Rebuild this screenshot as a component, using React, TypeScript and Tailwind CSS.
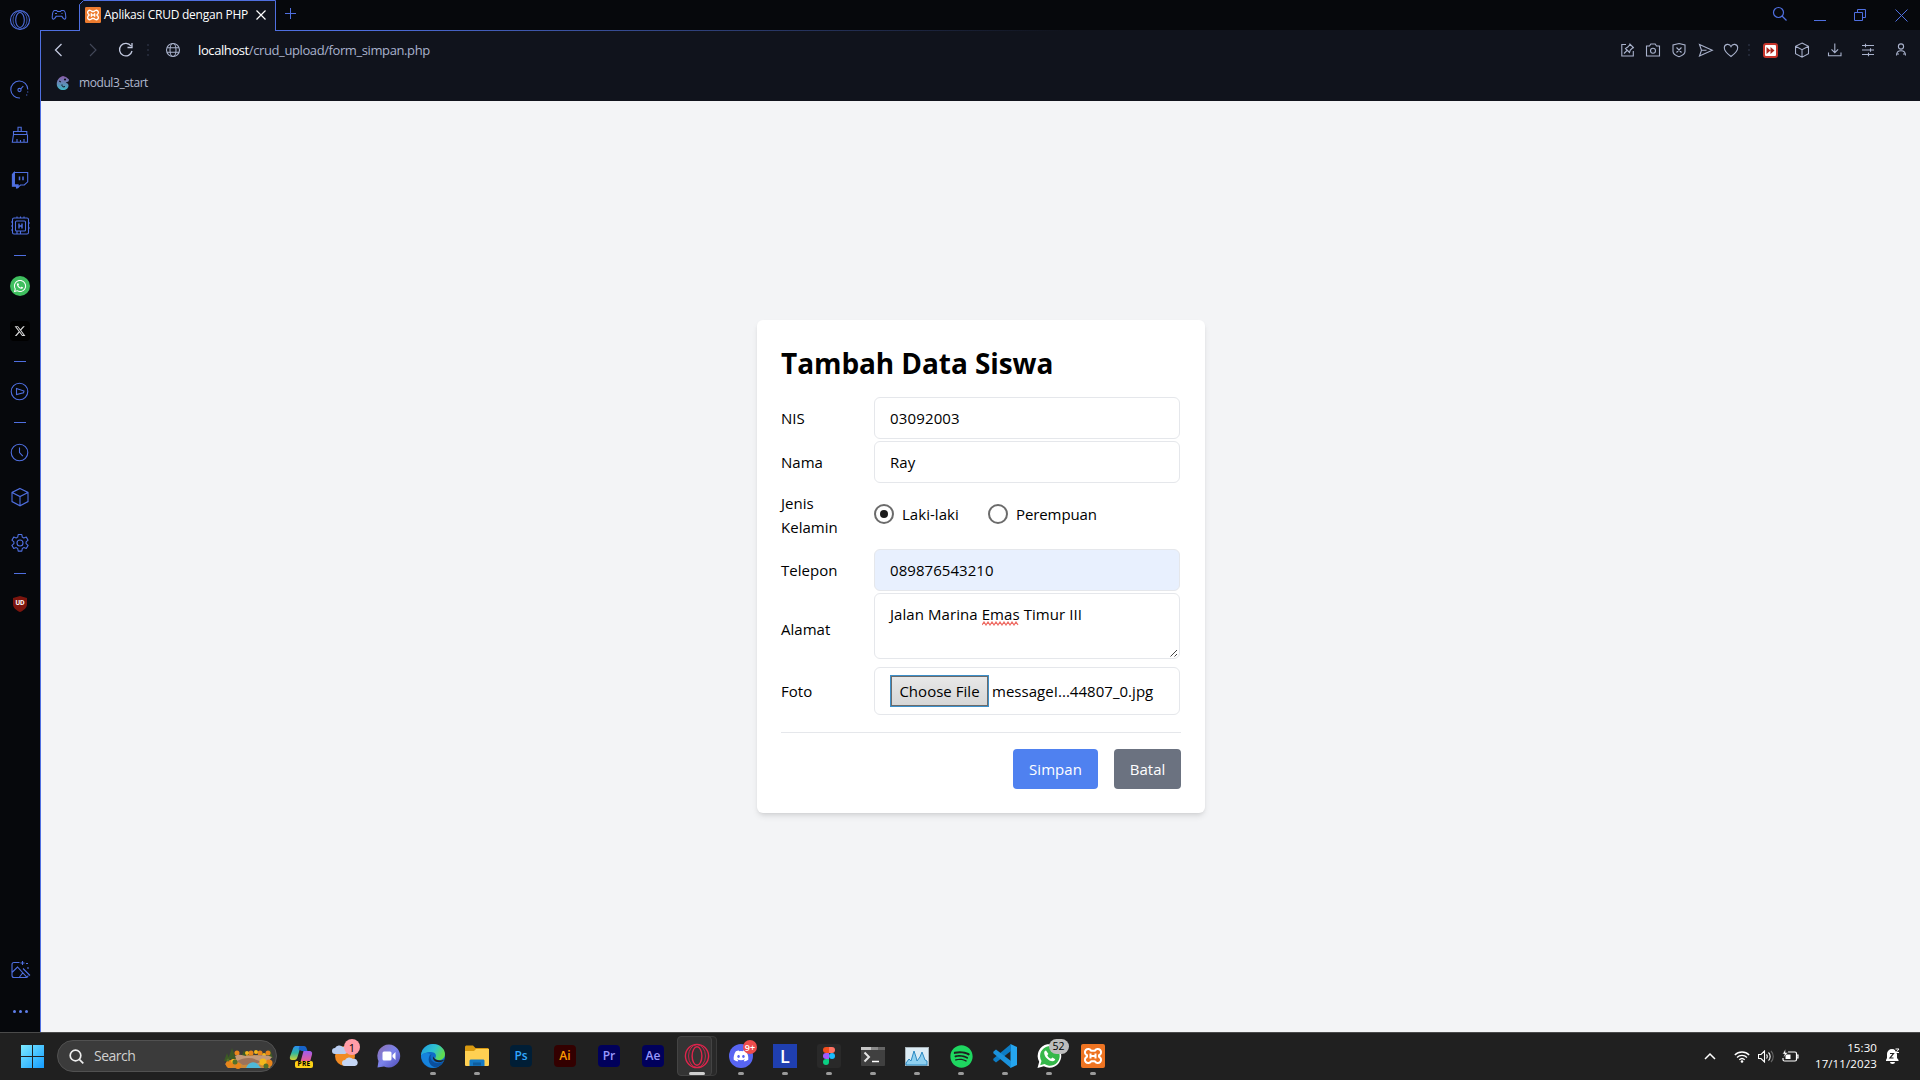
import React from "react";
import { FaWhatsapp, FaSpotify, FaDiscord } from "react-icons/fa";
import { FaXTwitter } from "react-icons/fa6";

const UI = "font-['Open_Sans','Noto_Sans',sans-serif]";

type IconProps = { children: React.ReactNode; size?: number; className?: string };
const Ico = ({ children, size = 24, className = "" }: IconProps) => (
  <svg width={size} height={size} viewBox={`0 0 ${size} ${size}`} fill="none" stroke="currentColor" strokeWidth="1.1" className={`shrink-0 ${className}`}>
    {children}
  </svg>
);

const OperaRing = () => (
  <>
    <circle cx="12" cy="12" r="9.5" />
    <ellipse cx="12" cy="12" rx="7" ry="9" strokeWidth=".7" />
    <ellipse cx="12" cy="12" rx="4.3" ry="7.5" />
  </>
);
const Cube = () => (
  <path d="M12 3.4 20 7.4V16.6L12 20.8 4 16.6V7.4ZM4 7.4 12 11.6 20 7.4M12 11.6V20.8" />
);
const XamppMark = () => (
  <path d="M10.2 6.8A3.300 3.300 0 1 0 6 11.300V12.700A3.300 3.300 0 1 0 10.200 17.200H13.800A3.300 3.300 0 1 0 18 12.700V11.300A3.300 3.300 0 1 0 13.800 6.800ZM9.500 9.500V14.500M14.500 9.500V14.500M9.500 12H14.500" stroke="#fff" strokeWidth="2" strokeLinejoin="round" />
);

const Dash = () => <div className="mt-[18px] h-px w-3 shrink-0 bg-[#4f6fe0]" />;

const Sidebar = () => (
  <aside className="flex h-[1032px] w-10 shrink-0 flex-col items-center bg-[#06080c] pt-2 text-[#4f6fe0]">
    <Ico><OperaRing /></Ico>
    <Ico className="mt-[46px] -ml-px">
      <path d="M12 20a8.500 8.500 0 1 1 7.800-8.500" /><path d="M19.700 13.500v1M18.700 16.500v1" /><circle cx="11.500" cy="12" r="1.600" /><path d="m12.700 10.800 2.600-2.600" />
    </Ico>
    <Ico className="mt-[21px]">
      <path d="M10 8V4.300h3.200V8M5.500 8.500h13.300v3H5.500ZM5.500 11.500 4.300 19.300H19.500V11.500M9 19v-3M12.500 19v-2M16 19v-3" />
    </Ico>
    <Ico className="mt-[21px]">
      <path d="M6.300 4.500H19.700V13.800L16.300 17H12.500L10 19.300V17H6.300Z" /><path d="M4.400 6.500 6.300 4.500V17H10V19.500L8.500 20V18.300H4.400Z" fill="currentColor" /><path d="M11.500 8.500v3.700M15 8.500v3.700" strokeWidth="1.500" />
    </Ico>
    <Ico className="mt-[22px]">
      <rect x="4.500" y="4" width="16" height="16" rx="1.500" /><rect x="7.500" y="7" width="10" height="10" rx="1" /><path d="M11 9.500v5M14 9.500v5M11 12h3" strokeWidth="1.400" /><path d="M9 2.500V4M12.500 2.500V4M16 2.500V4M9 20v-3M12.500 20v-3M3 8h1.500M3 12h1.500M3 16h1.500M20.500 9H22M20.500 14H22" />
    </Ico>
    <div className="mt-[17px] h-px w-3 shrink-0 bg-[#4f6fe0]" />
    <div className="mt-5 flex size-5 shrink-0 items-center justify-center rounded-full bg-[#3fbf5f] text-white"><FaWhatsapp size={14} /></div>
    <div className="mt-[25px] flex size-5 shrink-0 items-center justify-center rounded bg-black text-[#d9d9d9]"><FaXTwitter size={12} /></div>
    <div className="mt-5 h-px w-3 shrink-0 bg-[#4f6fe0]" />
    <Ico className="mt-[18px]"><circle cx="11.500" cy="11.500" r="8.300" /><path d="M8.500 8.500 16 11 15.500 12.800 8.500 14.500Z" /></Ico>
    <Dash />
    <Ico className="mt-[18px]"><circle cx="11.500" cy="11.500" r="8.300" /><path d="M11.500 6.500V11.500L14.800 15.200" /></Ico>
    <Ico className="mt-5 -ml-px"><Cube /></Ico>
    <Ico className="mt-[22px] -ml-px">
      <path d="m10.200 3.500h3.600l.5 2.600 1.500.9 2.500-.9 1.800 3.100-2 1.700v1.800l2 1.700-1.800 3.100-2.500-.9-1.500.9-.5 2.600h-3.600l-.5-2.600-1.500-.9-2.500.9-1.800-3.100 2-1.700v-1.800l-2-1.700 1.800-3.100 2.500.9 1.500-.9Z" strokeLinejoin="round" /><circle cx="12" cy="12" r="3" />
    </Ico>
    <Dash />
    <div className="mt-[18px] grid size-6 shrink-0 place-items-center">
      <svg width="14" height="16" viewBox="0 0 14 16" className="col-start-1 row-start-1"><path d="M7 0 14 2V8c0 4-3.500 6.500-7 8C3.500 14.500 0 12 0 8V2Z" fill="#7c150e" /></svg>
      <span className="col-start-1 row-start-1 -mt-0.5 font-['Roboto',sans-serif] text-[7px] font-bold leading-none text-white">UD</span>
    </div>
    <Ico className="mt-[342px]">
      <path d="M11.500 4.500H6a2 2 0 0 0-2 2V17.500a2 2 0 0 0 2 2H18.500a2 2 0 0 0 1.500-2M4 14.500 9.500 9 19 19.300M11.500 19 15 14.500M14.500 3v4M12.500 5h4M18 5.500h2M20 9v2M15 10.500 22 17.500" />
    </Ico>
    <div className="mt-7 flex gap-[3px]"><i className="size-[3px] rounded-full bg-[#5f7eea]" /><i className="size-[3px] rounded-full bg-[#5f7eea]" /><i className="size-[3px] rounded-full bg-[#5f7eea]" /></div>
  </aside>
);

const TabStrip = () => (
  <div className="flex h-[31px] bg-[#06080c] text-[#4f6fe0]">
    <div className="flex w-[39px] justify-center border-b border-[#4f6fe0] pt-[3px]">
      <Ico className="-ml-0.5">
        <path d="M7.500 7.500h2.200l.8 1h3l.8-1h2.200c1.500 0 2.200 4 2.300 7 0 2-1.800 2-2.500.8l-1.500-2h-5.600l-1.500 2c-.7 1.200-2.500 1.200-2.500-.8.1-3 .8-7 2.300-7Z" /><path d="M8 10.500h2M14.500 10.500h1" />
      </Ico>
    </div>
    <div className="relative flex w-[197px] items-start">
      <svg className="absolute inset-0" width="197" height="31" fill="#10131c" stroke="#4f6fe0"><path d="M.5 31V4.500L4.500.5H196.500V31" /><path d="M1 30.500H196" stroke="#10131c" /></svg>
      <div className="relative flex w-full items-center pl-1.5 pt-[7px] text-white">
        <svg width="16" height="16" viewBox="0 0 24 24" fill="none"><rect width="24" height="24" rx="2" fill="#ee7c2f" /><XamppMark /></svg>
        <span className="ml-[3px] w-[145px] whitespace-nowrap text-[12px] leading-4 tracking-[-0.24px]">Aplikasi CRUD dengan PHP</span>
        <svg width="12" height="12" className="ml-1.5" stroke="currentColor" strokeWidth="1.200"><path d="m1.500 1.500 9 9M10.500 1.500l-9 9" /></svg>
      </div>
    </div>
    <div className="flex flex-1 flex-col">
      <div className="flex h-[30px] items-start">
        <svg width="12" height="12" className="ml-[9px] mt-2" stroke="currentColor"><path d="M5.500 0v11M0 5.500h11" /></svg>
        <div className="ml-auto flex">
          <svg width="16" height="16" className="mr-[26px] mt-1.5" fill="none" stroke="currentColor" strokeWidth="1.200"><circle cx="6.500" cy="6.500" r="5" /><path d="m10 10 4.500 4.500" /></svg>
          <svg width="12" height="24" className="mr-7" stroke="currentColor"><path d="M0 20.500h12" /></svg>
          <svg width="13" height="13" className="mr-7 mt-[9px]" fill="none" stroke="currentColor"><path d="M.5 3.500h8v8h-8ZM3.500 3V.5h8v8H9" /></svg>
          <svg width="13" height="13" className="mr-3 mt-[9px]" stroke="currentColor"><path d="m.5.5 12 12M12.500.5l-12 12" /></svg>
        </div>
      </div>
      <div className="h-px bg-gradient-to-r from-[#4f6fe0] from-5% to-[#10131c] to-48%" />
    </div>
  </div>
);

const Dots = () => (
  <div className="flex flex-col gap-[3px]"><i className="size-0.5 bg-[#222736]" /><i className="size-0.5 bg-[#222736]" /><i className="size-0.5 bg-[#222736]" /></div>
);

const AddressBar = () => (
  <div className="flex h-[38px] items-center bg-[#10131c] pl-[6px] text-[#a9b2cc]">
    <Ico className="text-[#c3cae0]"><path d="m14.500 6-6 6 6 6" strokeWidth="1.300" /></Ico>
    <Ico className="ml-[9px] text-[#434859]"><path d="m10 6 6 6-6 6" /></Ico>
    <Ico className="ml-2.5 text-[#c3cae0]"><path d="M17 8a6.300 6.300 0 1 0 1 5M18 5v4.500h-4.500" strokeWidth="1.300" /></Ico>
    <div className="ml-[9px]"><Dots /></div>
    <Ico className="ml-3"><circle cx="12" cy="12" r="6.500" /><ellipse cx="12" cy="12" rx="3" ry="6.500" /><path d="M6 9.800h12M6 14.200h12" /></Ico>
    <span className="ml-[13px] whitespace-nowrap text-[13px] leading-5 tracking-[-0.4px]"><span className="text-white">localhost</span>/crud_upload/form_simpan.php</span>
    <div className="ml-auto flex items-center">
      <Ico><path d="M10 6.500H5.800v11.500h11.500V13M8 15.500l3-3M9.500 10.500l4 4 .8-2.500 2.700-2.500.8.500-4.300-4.300.5.800L11.800 9Z" /></Ico>
      <Ico className="ml-px"><path d="M5.500 8h3l1.300-2h4.400l1.300 2h3v10h-13Z" /><circle cx="12" cy="12.700" r="2.500" /></Ico>
      <Ico className="ml-0.5"><path d="M12 5.500 18 7v6.500c0 2.300-3 4.200-6 5.200-3-1-6-2.900-6-5.200V7ZM9.500 9.500l5 5M14.500 9.500l-5 5" /></Ico>
      <Ico className="ml-[3px]"><path d="m5.500 6.500 12.800 5.800L5.500 18l2-5.700ZM7.500 12.300h5" /></Ico>
      <Ico className="ml-px"><path d="M12 18.500C8.500 16 5.300 13.300 5.300 9.800c0-4 5.200-4.700 6.700-1.200 1.500-3.500 6.700-2.800 6.700 1.200 0 3.500-3.200 6.200-6.700 8.700Z" /></Ico>
      <div className="ml-[5px]"><Dots /></div>
      <div className="ml-[13px] flex size-[15px] items-center justify-center rounded-[3px] bg-[#c7352b]">
        <svg width="11" height="11"><rect width="11" height="11" rx="1" fill="#fff" /><path d="M1.500 2 5.500 5.500 1.500 9ZM5.500 2 9.500 5.500 5.500 9Z" fill="#a9271f" /></svg>
      </div>
      <Ico className="ml-3"><g transform="translate(2.300 2.300) scale(.81)" strokeWidth="1.300"><Cube /></g></Ico>
      <Ico className="ml-[9px]"><path d="M5.500 14.500v3.300h12.500v-3.300M11.800 5.500v9M8.500 11.300l3.300 3.300 3.300-3.300" /></Ico>
      <Ico className="ml-[9px]"><path d="M6 7.500h12M6 12h12M6 16.500h12M9.500 5.800v3.400M14.500 10.300v3.400M12.500 14.800v3.400" /></Ico>
      <Ico className="ml-[9px] mr-[7px]"><circle cx="12" cy="8.500" r="2.600" /><path d="M7.500 17.500c0-3 1.500-4.700 4.500-4.700s4.500 1.700 4.500 4.700M7.500 16h2.500M14 16h2.500" /></Ico>
    </div>
  </div>
);

const Bookmarks = () => (
  <div className="flex h-8 items-center bg-[#10131c] pb-1 pl-[15px] text-[#b0b8ce]">
    <svg width="14" height="16" viewBox="0 0 14 16" fill="none">
      <defs><linearGradient id="cham" x2="0" y2="1"><stop stopColor="#8b5aa8" /><stop offset="1" stopColor="#3fb7c4" /></linearGradient></defs>
      <path d="M7 1C3 2 .5 5.500.8 9.500 1 13 4 15 7 15c3.500 0 5.500-2 5.500-4.500 0-2-2-3-3.300-2l1.600-1.500C12.500 7 13 5.500 13 4.500L10 2Z" fill="url(#cham)" /><circle cx="9" cy="4.500" r="1.100" fill="#10131c" /><path d="M9 11.500c-1.500 1-3.500 0-3-2M3 6l2 1" stroke="#10131c" />
    </svg>
    <span className="ml-[9px] text-[12px] leading-4 tracking-[-0.42px]">modul3_start</span>
  </div>
);

const Label = ({ children }: { children: React.ReactNode }) => <div className="w-[93px] shrink-0">{children}</div>;
const field = "w-[306px] rounded-md border border-gray-200 px-[15px]";

const FormCard = () => (
  <div className="w-[448px] rounded-md bg-white p-6 text-[15px] leading-6 tracking-[0.03px] text-black shadow-md">
    <h1 className="mb-4 whitespace-nowrap pt-px text-[28px] font-bold leading-9 tracking-[-0.08px]">Tambah Data Siswa</h1>
    <div className="flex h-[42px] items-center"><Label>NIS</Label><div className={`${field} flex h-full items-center tracking-[0.15px]`}>03092003</div></div>
    <div className="mt-0.5 flex h-[42px] items-center"><Label>Nama</Label><div className={`${field} flex h-full items-center`}>Ray</div></div>
    <div className="flex h-[66px] items-center pb-1">
      <Label><span className="relative top-px">Jenis<br />Kelamin</span></Label>
      <div className="flex size-5 items-center justify-center rounded-full border-2 border-[#6b6b6b]"><div className="size-2 rounded-full bg-[#1b1b1b]" /></div>
      <span className="ml-2 w-[58px] whitespace-nowrap">Laki-laki</span>
      <div className="ml-7 size-5 rounded-full border-2 border-[#6b6b6b]" />
      <span className="ml-2 tracking-[-0.1px]">Perempuan</span>
    </div>
    <div className="flex h-[42px] items-center"><Label>Telepon</Label><div className={`${field} flex h-full items-center bg-[#e8f0fe] tracking-[0.06px]`}>089876543210</div></div>
    <div className="mt-0.5 flex h-[66px] items-center">
      <Label><span className="relative top-[3px]">Alamat</span></Label>
      <div className={`${field} relative h-full pt-2 tracking-[0.07px]`}>
        Jalan Marina <span className="relative">Emas<svg className="absolute left-0 top-[17px]" width="38" height="5" fill="none" stroke="#ee6a62" strokeWidth="1.200"><path d="M0 4l2-3 2 3 2-3 2 3 2-3 2 3 2-3 2 3 2-3 2 3 2-3 2 3 2-3 2 3 2-3 2 3 2-3 2 3" /></svg></span> Timur III
        <svg className="absolute bottom-px right-px" width="8" height="8" stroke="#444"><path d="M.5 7.500 7 1M4.500 7.500 7 5" /></svg>
      </div>
    </div>
    <div className="mt-2 flex h-12 items-center">
      <Label>Foto</Label>
      <div className={`${field} flex h-full items-center whitespace-nowrap`}>
        <div className="flex h-8 w-[99px] items-center justify-center border border-[#3d8fc9] bg-gradient-to-b from-[#e8e8e8] to-[#d6d6d6]"><div className="flex h-[30px] w-[97px] items-center justify-center border border-[#6b6b6b]">Choose File</div></div>
        <span className="ml-[3px]">messageI...44807_0.jpg</span>
      </div>
    </div>
    <div className="mt-[17px] flex justify-end gap-4 border-t border-gray-200 pt-4 text-white">
      <div className="flex h-10 w-[85px] items-center justify-center rounded bg-[#4f81f0]">Simpan</div>
      <div className="flex h-10 w-[67px] items-center justify-center rounded bg-[#6b7280]">Batal</div>
    </div>
  </div>
);

type TaskProps = { children: React.ReactNode; run?: boolean; active?: boolean };
const Task = ({ children, run, active }: TaskProps) => (
  <div className="relative flex h-12 w-11 shrink-0 items-center justify-center">
    {active && <><div className="absolute left-1.5 top-1 h-10 w-[36px] rounded border border-[#3a3a3a] bg-[#292929]" /><div className="absolute left-0.5 top-1 h-10 w-[35px] rounded border border-[#444] bg-[#343434]" /></>}
    <div className="relative">{children}</div>
    {run && <div className="absolute bottom-[5px] left-[19px] h-[3px] w-1.5 rounded-full bg-[#9a9a9a]" />}
    {active && <div className="absolute bottom-[5px] left-3.5 h-[3px] w-4 rounded-full bg-[#d0d0d0]" />}
  </div>
);
const adobe = "flex size-[22px] items-center justify-center rounded text-[12px] font-semibold leading-none";

const Taskbar = () => (
  <footer className="flex h-12 items-center border-t border-[#4a4a4a] bg-[#202020] pb-px text-white">
    <svg width="23" height="23" className="ml-[21px]"><defs><linearGradient id="win" x2="1" y2="1"><stop stopColor="#7ceaff" /><stop offset="1" stopColor="#149cff" /></linearGradient></defs><path d="M0 0H11V11H0ZM12 0H23V11H12ZM0 12H11V23H0ZM12 12H23V23H12Z" fill="url(#win)" /></svg>
    <div className="ml-[13px] flex h-8 w-[220px] shrink-0 items-center rounded-full border border-[#515151] bg-[#3b3b3b] pl-[11px]">
      <svg width="15" height="15" fill="none" stroke="#eee" strokeWidth="1.700"><circle cx="6.500" cy="6.500" r="5.300" /><path d="m10.300 10.300 4 4" /></svg>
      <span className="ml-[10px] text-[14px] leading-5 tracking-[-0.5px] text-[#d0d0d0]">Search</span>
      <svg width="50" height="22" viewBox="0 0 50 22" className="ml-auto mr-0.5 mt-1">
        <path d="M1 17c3-4 8-4 12-7 6-4 12-1 17-2 6 0 14 3 18 8l-2 5H4Z" fill="#c98a3c" />
        <path d="M8 1 4 12h8ZM3 6 0 14h6ZM20 3l-3 8h6ZM46 2l-3 9h6Z" fill="#3c5a25" />
        <g fill="#e8851a"><circle cx="13" cy="6" r="2.500" /><circle cx="27" cy="6" r="2.500" /><circle cx="36" cy="6" r="2.500" /><circle cx="44" cy="6" r="2.500" /></g>
        <g fill="#f4b81c"><circle cx="23" cy="6" r="2" /><circle cx="32" cy="5" r="2" /><circle cx="40" cy="8" r="2" /></g>
        <path d="M11 9c5-3 8 0 14 0 4 0 14-2 23 1l-4 5-14 4-17-5Z" fill="#c39a7a" /><path d="M13 14c8-4 16-4 24 1l-6 2-12 1Z" fill="#9d735a" />
        <g fill="#e8851a"><circle cx="6" cy="17" r="4" /><circle cx="14" cy="19" r="3" /><circle cx="45" cy="16" r="3.500" /></g>
        <g fill="#f4b81c"><circle cx="39" cy="15" r="3.500" /><circle cx="9" cy="14" r="2" /></g>
        <g fill="#52702a"><circle cx="11" cy="15" r="2.500" /><circle cx="4" cy="13" r="1.500" /><circle cx="42" cy="19" r="2.500" /></g>
        <path d="M22 21c2-5 6-7 10-5 2 1 4 4 5 5Z" fill="#4fb8d8" />
      </svg>
    </div>
    <div className="ml-0.5 flex">
      <Task>
        <svg width="24" height="24" className="block"><defs><linearGradient id="cpa" y2="1" x2="0"><stop stopColor="#2b8cf0" /><stop offset=".5" stopColor="#2fb8a0" /><stop offset="1" stopColor="#d2d230" /></linearGradient><linearGradient id="cpb" y2="1" x2="0"><stop stopColor="#a05cf0" /><stop offset="1" stopColor="#f05f8a" /></linearGradient></defs>
          <path d="M4 4.500C4.700 2.500 6 2 7.500 2H14c-2 0-2.700 1.500-3.300 3.500L8.500 13c-.6 2-1.500 3-3 3H3c-2 0-2.500-1.500-2-3.500Z" fill="url(#cpa)" /><path d="M10.500 2H15c1.500 0 2.300 1 2.700 2.500L18.500 7H13c-1.500 0-2-1.500-3.500-1.500Z" fill="#1763c9" /><path d="M14.500 7h6c2 0 3 1.500 2.500 3.500L21 18H11.500Z" fill="url(#cpb)" /></svg>
        <span className="absolute bottom-0 left-[6px] flex h-[7px] w-[18px] items-center justify-center rounded-[2px] bg-[#fdd116] text-[6.500px] font-bold leading-none tracking-[0.300px] text-black">PRE</span>
      </Task>
      <Task>
        <svg width="26" height="24" className="block"><circle cx="13" cy="12" r="10" fill="#f08a24" /><path d="M3 10a3 3 0 0 1 0-6 5 5 0 0 1 8-1 3.500 3.500 0 0 1 2 7Z" fill="#b9cdf0" /><path d="M13 22a3 3 0 0 1 0-6 5 5 0 0 1 8-1 3.500 3.500 0 0 1 2 7Z" fill="#c5d6f5" /></svg>
        <span className="absolute -top-[5px] left-[12px] flex size-4 items-center justify-center rounded-full bg-[#ff9ca8] text-[11px] leading-none text-black">1</span>
      </Task>
      <Task>
        <svg width="24" height="24" className="block"><defs><linearGradient id="chat" x2="1" y2="1"><stop stopColor="#8f6fae" /><stop offset=".5" stopColor="#7b83eb" /><stop offset="1" stopColor="#4f4bb5" /></linearGradient></defs><path d="M12 .5A11.500 11.500 0 1 1 7 22.500L.5 23.500 1.500 17A11.500 11.500 0 0 1 12 .5Z" fill="url(#chat)" /><rect x="5.500" y="7.500" width="9" height="9" rx="1.500" fill="#fff" /><path d="m15.500 11 3-3v8l-3-3Z" fill="#fff" /></svg>
      </Task>
      <Task run>
        <svg width="24" height="24" className="block"><defs><linearGradient id="edg" x2="1" y2=".4"><stop stopColor="#1f9be0" /><stop offset=".6" stopColor="#2fc3cf" /><stop offset="1" stopColor="#5fdb50" /></linearGradient></defs><circle cx="12" cy="12" r="12" fill="#0f6cc8" /><path d="M0 11C1 4 6 0 12 0c7 0 12 5 12 10 0 4-3 6-6 6-3 0-4.500-1-3.500-2.500C16 11 14 8 10 8 5 8 1 10 0 12Z" fill="url(#edg)" /><path d="M9 10c-3 5 0 12 7 13.300C8 25.500 1 20 0 12c1-3 6-4 9-2Z" fill="#1683dc" /><path d="M10.500 10c-2 3-1 8 5 9 3 .5 5.500-.5 7-1.700C20 22 16 24 13 23 7 21 6 13 10.500 10Z" fill="#0b4f9c" /><path d="M23.500 15.500c-1 1.500-3 2.700-5.500 2.700-4 0-6.500-2.700-6-5.700 2 4 7 5 11.500 3Z" fill="#202020" /></svg>
      </Task>
      <Task run>
        <svg width="24" height="22" className="block"><path d="M0 2.500C0 1 .5.500 2 .5h6L10.500 3H22c1.500 0 2 .5 2 2V20H0Z" fill="#d99a10" /><path d="M0 6h9l2-2H24v15.500c0 1-.5 1.500-1.500 1.500h-21C.5 21 0 20.500 0 19.500Z" fill="#ffd052" /><path d="M4.500 21V16c0-1 .7-1.500 1.500-1.500H18c1 0 1.500.5 1.500 1.500v5Z" fill="#1479c4" /><path d="M8 17.500h8v3H8Z" fill="#0f5d9c" /></svg>
      </Task>
      <Task><div className={`${adobe} bg-[#001e36] text-[#31a8ff]`}>Ps</div></Task>
      <Task><div className={`${adobe} bg-[#330000] text-[#ff9a00]`}>Ai</div></Task>
      <Task><div className={`${adobe} bg-[#00005b] text-[#9999ff]`}>Pr</div></Task>
      <Task><div className={`${adobe} bg-[#00005b] text-[#9999ff]`}>Ae</div></Task>
      <Task active><div className="text-[#e0244c]"><svg width="26" height="26" viewBox="0 0 24 24" fill="none" stroke="currentColor" strokeWidth="1.300" className="block"><circle cx="12" cy="12" r="10.700" /><ellipse cx="12" cy="12" rx="7.800" ry="10.500" strokeWidth=".8" /><ellipse cx="12" cy="12" rx="4.500" ry="8.500" /></svg></div></Task>
      <Task run>
        <div className="flex size-6 items-center justify-center rounded-full bg-[#5865f2]"><FaDiscord size={16} /></div>
        <span className="absolute -top-[4px] left-[14px] flex size-[14px] items-center justify-center rounded-full bg-[#ed4c4c] text-[9px] font-semibold leading-none">9+</span>
      </Task>
      <Task run><div className="flex size-6 items-center justify-center bg-[#1f3fb0] text-[18px] font-semibold leading-none">L</div></Task>
      <Task run>
        <svg width="24" height="24" className="block"><rect width="24" height="24" rx="3" fill="#292929" /><path d="M12 3H9a3 3 0 0 0 0 6h3Z" fill="#f24e1e" /><path d="M12 3h3a3 3 0 0 1 0 6h-3Z" fill="#ff7262" /><path d="M12 9H9a3 3 0 0 0 0 6h3Z" fill="#a259ff" /><circle cx="15" cy="12" r="3" fill="#1abcfe" /><path d="M12 15H9a3 3 0 1 0 3 3Z" fill="#0acf83" /></svg>
      </Task>
      <Task run>
        <svg width="24" height="19" className="block"><rect width="24" height="19" rx="1" fill="#404040" /><path d="M0 0h10v3H0Z" fill="#c6c6c6" /><path d="M10 0h7v3h-7Z" fill="#8a8a8a" /><path d="M17 0h7v3h-7Z" fill="#666" /><path d="m3.500 5.500 4.500 4.500-4.500 4.500" stroke="#e5e5e5" strokeWidth="2" fill="none" /><path d="M11 14.500h7" stroke="#fff" strokeWidth="1.500" /></svg>
      </Task>
      <Task run>
        <svg width="24" height="19" className="block"><rect x=".5" y=".5" width="23" height="18" fill="#dcecf5" stroke="#a9b4ba" /><path d="M1 16 4 12l2 2 3-10 2 6 1 4 3-4 2-5 3 8 2 1v4H1Z" fill="#8fd0f0" stroke="#2d8ac2" /></svg>
      </Task>
      <Task run><div className="text-[#1ed760]"><FaSpotify size={23} /></div></Task>
      <Task run>
        <svg width="24" height="24" className="block"><path d="M17.500 0 24 3V21l-6.500 3Z" fill="#25a5ee" /><path d="M18 0v7L3 18.500.3 16.300V14.800Z" fill="#0d7cc4" /><path d="M18 24v-7L3 5.500.3 7.700V9.200Z" fill="#1b92dc" /></svg>
      </Task>
      <Task run>
        <svg width="25" height="24" viewBox="0 0 24 24" className="block"><path d="M0 24l1.700-6.200A11.800 11.800 0 1 1 6.300 22.300Z" fill="#fff" /><path d="M2.700 21.300 4 17A9.800 9.800 0 1 1 7 20.100Z" fill="#35b84a" /><path d="M8.500 6.500c-1 0-2 1.200-1.800 2.700.5 4 4.300 7.600 8.300 8 1.500.1 2.700-1 2.700-2l-2.700-1.700-1.500 1.300c-1.700-.6-3-2-3.700-3.600l1.100-1.300Z" fill="#fff" /></svg>
        <span className="absolute -top-[5px] left-[12px] flex h-[15px] w-5 items-center justify-center rounded-full bg-[#bdbdbd] text-[10.500px] leading-none text-black">52</span>
      </Task>
      <Task run><svg width="24" height="24" viewBox="0 0 24 24" fill="none" className="block"><rect width="24" height="24" rx="2" fill="#ee7422" /><XamppMark /></svg></Task>
    </div>
    <div className="ml-auto flex items-center">
      <svg width="12" height="8" fill="none" stroke="#fff" strokeWidth="1.500"><path d="m1 7 5-5 5 5" /></svg>
      <svg width="16" height="13" className="ml-[18px]" fill="none" stroke="#fff" strokeWidth="1.300"><path d="M.8 5a10.200 10.200 0 0 1 14.400 0M3 7.500a7 7 0 0 1 10 0M5.300 9.800a3.900 3.900 0 0 1 5.400 0" /><circle cx="8" cy="11.500" r="1.300" fill="#fff" stroke="none" /></svg>
      <svg width="16" height="13" className="ml-2" fill="none" stroke="#fff" strokeWidth="1.100"><path d="M.5 4.500H3L6.500 1v11L3 8.500H.5ZM8.500 4.500c1 1 1 3 0 4M10.500 2.500c2.200 2 2.200 6 0 8" /><path d="M13 1c3 3 3 8 0 11" stroke="#666" /></svg>
      <svg width="17" height="14" className="ml-2" fill="none" stroke="#fff" strokeWidth="1.200"><path d="M6 3h7a1.500 1.500 0 0 1 1.500 1.500v6A1.500 1.500 0 0 1 13 12H2.500A1.500 1.500 0 0 1 1 10.500V9M15 6h1v3h-1" /><path d="M3.500 5.500h5v4.500h-5Z" fill="#fff" stroke="none" /><path d="M3.500 0 .5 5h2L1.500 8.500 6 3.500H3.500Z" fill="#fff" stroke="#202020" strokeWidth=".5" /></svg>
      <div className="ml-[14px] w-16 whitespace-nowrap text-right text-[11.500px] leading-4 tracking-[0.100px]">15:30<br />17/11/2023</div>
      <svg width="15" height="16" className="ml-2 mr-[20px]"><path d="M1 12 2 10V6a5 5 0 0 1 10 0v4l1.500 2v1H1ZM5 14h5a2.500 2 0 0 1-5 0Z" fill="#fff" /><path d="M5 5.500h3.500L5 10h3.500" stroke="#202020" strokeWidth="1.200" fill="none" /><path d="M9 0h6v6h-3Z" fill="#202020" /><path d="M10.500 1H14l-3 3.500h3" stroke="#fff" fill="none" /></svg>
    </div>
  </footer>
);

export default function App() {
  return (
    <div className={`${UI} h-[1080px] w-[1920px] overflow-hidden bg-[#202020]`}>
      <div className="flex h-[1032px]">
        <Sidebar />
        <div className="flex min-w-0 flex-1 flex-col">
          <TabStrip />
          <div className="flex flex-1 flex-col border-l border-[#4f6fe0]">
            <AddressBar />
            <Bookmarks />
            <main className="flex flex-1 items-center justify-center bg-[#f3f4f6] pl-px">
              <FormCard />
            </main>
          </div>
        </div>
      </div>
      <Taskbar />
    </div>
  );
}
